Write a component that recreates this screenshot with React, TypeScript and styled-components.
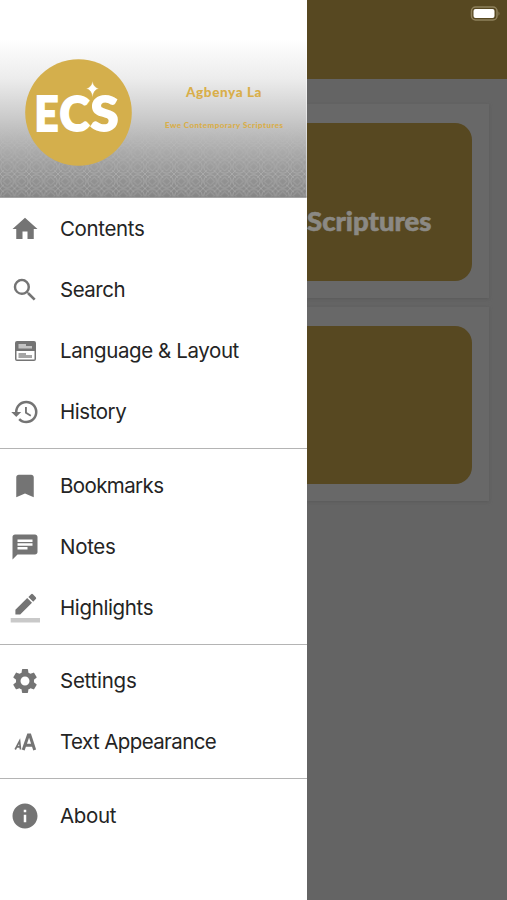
import React from "react";
import styled, { createGlobalStyle } from "styled-components";
import type { IconType } from "react-icons";
import { MdHome, MdSearch, MdHistory, MdBookmark, MdChat, MdSettings, MdInfo } from "react-icons/md";

const GlobalStyle = createGlobalStyle`
  *, *::before, *::after { box-sizing: border-box; }
  body { margin: 0; font-family: Inter, "Liberation Sans", sans-serif; }
`;

const Screen = styled.div`
  display: flex;
  width: 507px;
  height: 900px;
  overflow: hidden;
  background: #646464;
`;

const Drawer = styled.aside`
  display: flex;
  flex-direction: column;
  flex: none;
  width: 306.5px;
  background: #fff;
`;

const Banner = styled.header`
  flex: none;
  height: 197.5px;
  svg { display: block; }
`;

const Group = styled.ul<{ $first?: boolean }>`
  list-style: none;
  margin: 0;
  padding: ${(p) => (p.$first ? "1px" : "6px")} 0 5.3px;
  &:not(:last-child) { border-bottom: 1px solid #b4b4b4; }
`;

const Item = styled.li`
  display: flex;
  align-items: center;
  height: 61.1px;
  padding-left: 10px;
  gap: 20px;
  color: #242424;
  font-size: 20.5px;
  line-height: 24px;
`;

const IconSlot = styled.span`
  display: flex;
  flex: none;
  width: 30px;
  height: 30px;
  color: #747474;
  svg { display: block; width: 30px; height: 30px; overflow: visible; }
`;

const Label = styled.span<{ $spacing: number }>`
  white-space: nowrap;
  letter-spacing: ${(p) => p.$spacing}px;
`;

const Page = styled.main`
  flex: 1;
  min-width: 0;
  overflow: hidden;
`;

const AppBar = styled.div`
  display: flex;
  justify-content: flex-end;
  height: 79px;
  padding: 6px 6px 0 0;
  background: #574821;
`;

const Cards = styled.div`
  display: flex;
  flex-direction: column;
  gap: 9px;
  padding: 25px 18px 0 0;
`;

const Card = styled.section`
  height: 194px;
  padding: 19px 17px 17px 0;
  background: #686868;
  box-shadow: 0 1px 3px #5a5a5a;
`;

const Cover = styled.div`
  display: flex;
  align-items: center;
  height: 158px;
  padding-top: 40px;
  border-radius: 0 17px 17px 0;
  background: #574821;
`;

function LanguageLayoutIcon() {
  return (
    <svg viewBox="0 0 30 30" fill="currentColor">
      <path fillRule="evenodd" d="M7 5h17q2 0 2 2v16q0 2-2 2H7q-2 0-2-2V7q0-2 2-2zM6.500 15h18v8.500h-18z" />
      <path d="M8.500 8h7.500v2h6v2.500H8.500z" fill="#c3c3c3" />
      <path d="M8.500 17h7.500v2h6v3H8.500z" opacity=".65" />
    </svg>
  );
}

function HighlightIcon() {
  return (
    <svg viewBox="0 0 30 30" fill="currentColor">
      <path d="M5.400 16.800v4.800h4.800L22 9.800 17.200 5zM25.800 6a1.300 1.300 0 0 0 0-1.800l-2.900-2.900a1.300 1.300 0 0 0-1.800 0L18.400 4l4.800 4.800z" />
      <path d="M.7 25h29.300v4.500H.7z" fill="#c9c9c9" />
    </svg>
  );
}

function TextSizeIcon() {
  return (
    <svg viewBox="0 0 30 30" fill="none" stroke="currentColor">
      <path d="M13.200 23 18.400 8h1.400L24.700 23M15 18.200h8" strokeWidth="3" />
      <path d="M5.200 22.500 9.600 14.200l.9 8.300M7 19.800h3.500" strokeWidth="1.700" />
    </svg>
  );
}

function Battery() {
  return (
    <svg width="32" height="15" viewBox="0 0 32 15">
      <rect x="2.500" y="1" width="25.500" height="13" rx="4" fill="#574821" stroke="#8f815c" strokeWidth="1.500" />
      <rect x="4.500" y="3" width="21" height="9" rx="2" fill="#fff" />
      <path d="M29.500 5.200q2 2.300 0 4.600z" fill="#8f815c" />
    </svg>
  );
}

function BannerArt() {
  return (
    <svg width="306.500" height="197.500" viewBox="0 0 306.500 197.500">
      <defs>
        <linearGradient id="sky" x1="0" y1="0" x2="0" y2="1">
          <stop offset=".2" stopColor="#fff" />
          <stop offset=".4" stopColor="#ececec" />
          <stop offset=".6" stopColor="#cacaca" />
          <stop offset=".82" stopColor="#a0a0a0" />
          <stop offset="1" stopColor="#858585" />
        </linearGradient>
        <linearGradient id="fade" x1="0" y1="0" x2="0" y2="1">
          <stop offset=".6" stopColor="#000" />
          <stop offset=".9" stopColor="#fff" />
        </linearGradient>
        <mask id="lower"><rect width="307" height="198" fill="url(#fade)" /></mask>
        <pattern id="lattice" width="14.500" height="14.500" patternUnits="userSpaceOnUse">
          <g fill="none" stroke="#d4d4d4" strokeWidth=".9">
            <circle cx="7.250" cy="7.250" r="6.500" />
            <path d="M3 7.250 7.250 3l4.250 4.250-4.250 4.250zM0 0l4 4M14.500 0l-4 4M0 14.500l4-4M14.500 14.500l-4-4" />
          </g>
        </pattern>
      </defs>
      <rect width="306.500" height="197.500" fill="url(#sky)" />
      <rect width="306.500" height="197.500" fill="url(#lattice)" mask="url(#lower)" opacity=".38" />
      <path d="M0 197h306.500" stroke="#858585" />
      <circle cx="78.500" cy="112.500" r="53.300" fill="#d4af4c" />
      <g fill="#fff" stroke="#fff" strokeWidth="1.800" fontFamily="Lato, sans-serif" fontWeight="900" fontSize="47">
        <text x="34.500" y="130.500" textLength="24" lengthAdjust="spacingAndGlyphs">E</text>
        <text x="59.500" y="130.500" textLength="30" lengthAdjust="spacingAndGlyphs">C</text>
        <text x="90.500" y="130.500" textLength="28" lengthAdjust="spacingAndGlyphs">S</text>
      </g>
      <path d="M92.500 81q1 6.500 6.500 7.500-5.500 1-6.500 9-1-8-6.500-9 5.500-1 6.500-7.500z" fill="#fff" stroke="#d4af4c" strokeWidth=".5" />
      <g fill="#d9ae49" fontFamily="Lato, sans-serif" fontWeight="900">
        <text x="186" y="97" fontSize="13.500" textLength="75.500">Agbenya La</text>
        <text x="165" y="127.500" fontSize="8" textLength="118">Ewe Contemporary Scriptures</text>
      </g>
    </svg>
  );
}

function CoverTitle() {
  return (
    <svg width="130" height="38" viewBox="0 0 130 38">
      <text x="0" y="28" fill="#8b8984" stroke="#8b8984" strokeWidth=".6" fontFamily="Lato, sans-serif" fontWeight="900" fontSize="26" textLength="124.500" lengthAdjust="spacingAndGlyphs">Scriptures</text>
    </svg>
  );
}

type Entry = { label: string; icon: IconType | React.FC; spacing: number };

const groups: Entry[][] = [
  [
    { label: "Contents", icon: MdHome, spacing: -0.35 },
    { label: "Search", icon: MdSearch, spacing: -0.5 },
    { label: "Language & Layout", icon: LanguageLayoutIcon, spacing: -0.4 },
    { label: "History", icon: MdHistory, spacing: -0.45 },
  ],
  [
    { label: "Bookmarks", icon: MdBookmark, spacing: -0.6 },
    { label: "Notes", icon: MdChat, spacing: -0.3 },
    { label: "Highlights", icon: HighlightIcon, spacing: -0.37 },
  ],
  [
    { label: "Settings", icon: MdSettings, spacing: -0.25 },
    { label: "Text Appearance", icon: TextSizeIcon, spacing: -0.6 },
  ],
  [{ label: "About", icon: MdInfo, spacing: -0.35 }],
];

export default function App() {
  return (
    <>
      <GlobalStyle />
      <Screen>
        <Drawer>
          <Banner><BannerArt /></Banner>
          <nav>
            {groups.map((entries, i) => (
              <Group key={i} $first={i === 0}>
                {entries.map(({ label, icon: Icon, spacing }) => (
                  <Item key={label}>
                    <IconSlot><Icon /></IconSlot>
                    <Label $spacing={spacing}>{label}</Label>
                  </Item>
                ))}
              </Group>
            ))}
          </nav>
        </Drawer>
        <Page>
          <AppBar><Battery /></AppBar>
          <Cards>
            <Card><Cover><CoverTitle /></Cover></Card>
            <Card><Cover /></Card>
          </Cards>
        </Page>
      </Screen>
    </>
  );
}
